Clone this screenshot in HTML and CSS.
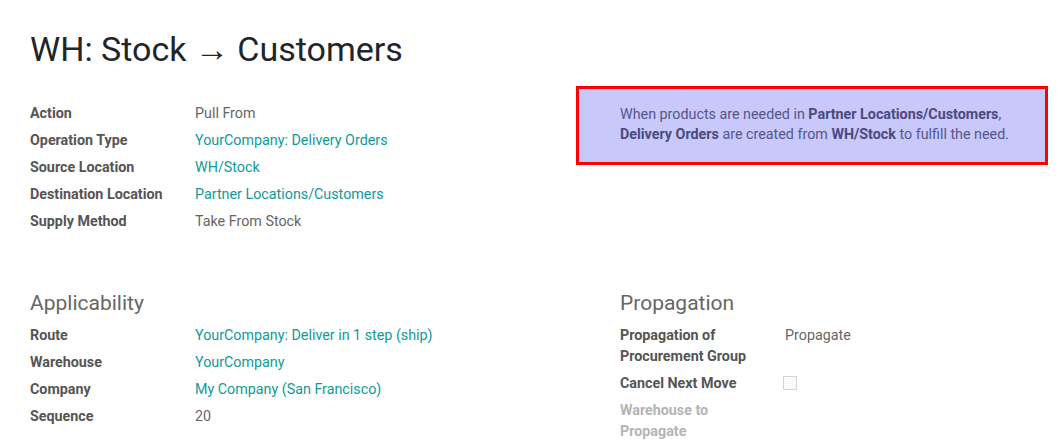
FILE: index.html
```html
<!DOCTYPE html>
<html>
<head>
<meta charset="utf-8">
<link rel="stylesheet" href="styles.css">
</head>
<body>
<div class="sheet">
  <h1 class="title">WH: Stock → Customers</h1>
  <div class="top">
    <div class="group group-main">
      <div class="row"><div class="label">Action</div><div class="value">Pull From</div></div>
      <div class="row"><div class="label">Operation Type</div><div class="value link">YourCompany: Delivery Orders</div></div>
      <div class="row"><div class="label">Source Location</div><div class="value link">WH/Stock</div></div>
      <div class="row"><div class="label">Destination Location</div><div class="value link">Partner Locations/Customers</div></div>
      <div class="row"><div class="label">Supply Method</div><div class="value">Take From Stock</div></div>
    </div>
    <div class="alert">
      When products are needed in <b>Partner Locations/Customers</b>,<br>
      <b>Delivery Orders</b> are created from <b>WH/Stock</b> to fulfill the need.
    </div>
  </div>
  <div class="bottom">
    <div class="group">
      <h2 class="heading">Applicability</h2>
      <div class="row"><div class="label">Route</div><div class="value link">YourCompany: Deliver in 1 step (ship)</div></div>
      <div class="row"><div class="label">Warehouse</div><div class="value link">YourCompany</div></div>
      <div class="row"><div class="label">Company</div><div class="value link">My Company (San Francisco)</div></div>
      <div class="row"><div class="label">Sequence</div><div class="value">20</div></div>
    </div>
    <div class="group group-side">
      <h2 class="heading">Propagation</h2>
      <div class="row"><div class="label">Propagation of Procurement Group</div><div class="value">Propagate</div></div>
      <div class="row"><div class="label">Cancel Next Move</div><div class="value"><span class="checkbox"></span></div></div>
      <div class="row"><div class="label muted">Warehouse to Propagate</div><div class="value"></div></div>
    </div>
  </div>
</div>
</body>
</html>
```

FILE: styles.css
```css
* { box-sizing: border-box; }
html, body { margin: 0; padding: 0; background: #fff; }
body {
  font-family: Roboto, "Noto Sans", "Liberation Sans", sans-serif;
  font-size: 14.3px;
  color: #666;
}
.sheet { padding: 0 15px 0 30px; }
.title {
  margin: 0;
  padding-top: 28px;
  font-size: 34px;
  line-height: 43px;
  font-weight: 400;
  color: #212529;
}
.top {
  display: flex;
  align-items: flex-start;
  margin-top: 15px;
}
.group { width: 590px; flex: none; }
.group-main { width: 546px; padding-top: 14px; }
.group-side { width: auto; flex: 1; min-width: 0; }
.row {
  display: flex;
  padding: 3px 0;
  line-height: 21px;
}
.label {
  width: 165px;
  flex: none;
  padding-right: 15px;
  font-weight: 700;
  color: #555;
}
.label.muted { color: #b4b4b4; }
.value { flex: 1; color: #666; }
.value.link { color: #0f9a9a; }
.alert {
  width: 472px;
  height: 79px;
  border: 3px solid #ff0000;
  background: #c8c8fb;
  color: #55558a;
  padding: 15px 10px 0 41px;
  line-height: 20px;
}
.alert b { font-weight: 700; color: #4a4a80; }
.bottom {
  display: flex;
  margin-top: 53px;
}
.heading {
  margin: 0 0 4px 0;
  font-size: 21px;
  line-height: 30px;
  font-weight: 400;
  color: #666;
}
.checkbox {
  display: inline-block;
  width: 14px;
  height: 14px;
  border: 1px solid #d4d4d4;
  background: #fafafa;
  vertical-align: middle;
  margin: -2px 0 0 -2px;
}
```
